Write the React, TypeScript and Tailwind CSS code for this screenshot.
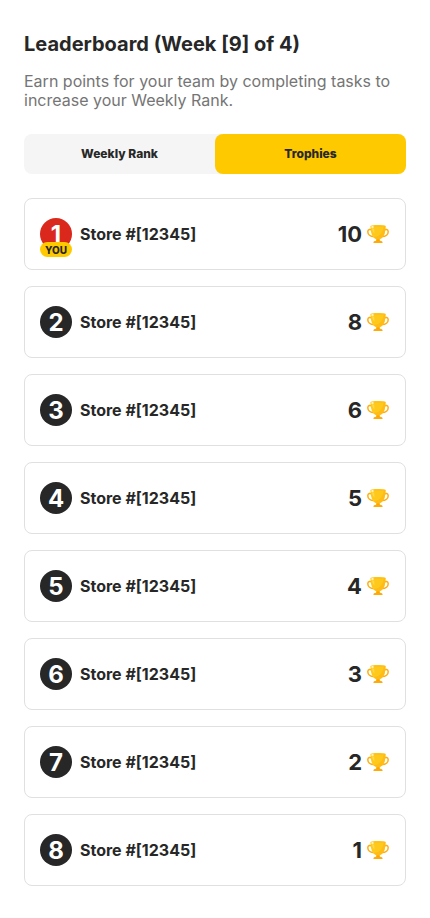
import { useState } from "react";

type Team = { rank: number; store: string; trophies: number; you?: boolean };

const teams: Team[] = [
  { rank: 1, store: "Store #[12345]", trophies: 10, you: true },
  { rank: 2, store: "Store #[12345]", trophies: 8 },
  { rank: 3, store: "Store #[12345]", trophies: 6 },
  { rank: 4, store: "Store #[12345]", trophies: 5 },
  { rank: 5, store: "Store #[12345]", trophies: 4 },
  { rank: 6, store: "Store #[12345]", trophies: 3 },
  { rank: 7, store: "Store #[12345]", trophies: 2 },
  { rank: 8, store: "Store #[12345]", trophies: 1 },
];

function TrophyIcon() {
  return (
    <svg viewBox="0 0 24 24" className="size-6" aria-hidden="true">
      <g fill="none" stroke="#ffad0a" strokeWidth="1.5">
        <path d="M6 8.200C4.400 7 1.800 7.300 1.800 9.700c0 2.700 2.600 4.800 6 4.800" />
        <path d="M18 8.200c1.600-1.200 4.200-.9 4.200 1.500 0 2.700-2.600 4.800-6 4.800" />
      </g>
      <path d="M10.400 15.500h3.200l.3 4h-3.800z" fill="#fca500" />
      <path d="M7.500 20.100c0-1 1.800-1.300 4.500-1.300s4.500.3 4.500 1.300v1h-9z" fill="#ffaa08" />
      <path
        d="M4.500 4.200c0-.7 3.300-1.100 7.500-1.100s7.500.4 7.500 1.100c0 7-2 13-7.500 13s-7.500-6-7.500-13z"
        fill="#ffc91c"
      />
      <path
        d="M19.500 4.200c0 7-2 13-7.500 13-2 0-3.500-.8-4.700-2.100 6.300-.2 10-4.700 10.400-11.600 1.100.2 1.800.4 1.800.7z"
        fill="#ffbc17"
      />
      <ellipse cx="12.500" cy="4.200" rx="6" ry=".6" fill="#ffbd18" />
      <path d="M6.200 6.400c.7.300 1.300.4 1.900.4l.4 4.500c-1.300-1-2.100-2.500-2.300-4.900z" fill="#ffd94f" />
      <circle cx="6.500" cy="5" r="1.200" fill="#fff0b3" />
    </svg>
  );
}

function RankBadge({ rank, you }: { rank: number; you?: boolean }) {
  return (
    <div
      className={`relative flex size-8 items-center justify-center rounded-full pt-0.5 text-2xl font-bold text-white ${
        you ? "bg-[#da291c]" : "bg-[#272727]"
      }`}
    >
      {rank}
      {you && (
        <span className="absolute inset-x-0 top-6 flex h-[15px] items-center justify-center rounded-full bg-[#ffc900] text-[10px] leading-3 font-extrabold text-[#272727]">
          YOU
        </span>
      )}
    </div>
  );
}

export default function App() {
  const [tab, setTab] = useState("Trophies");
  return (
    <main className="min-h-screen bg-white px-6 py-8 font-['Inter',sans-serif] text-[#272727]">
      <h1 className="text-xl leading-6 font-bold">Leaderboard (Week [9] of 4)</h1>
      <p className="mt-4 text-base leading-[19px] font-normal text-[#757575]">
        Earn points for your team by completing tasks to increase your Weekly Rank.
      </p>
      <div role="tablist" className="mt-6 grid grid-cols-2 rounded-lg bg-[#f5f5f5]">
        {["Weekly Rank", "Trophies"].map((name) => (
          <button
            key={name}
            type="button"
            role="tab"
            aria-selected={tab === name}
            onClick={() => setTab(name)}
            className={`h-10 rounded-lg text-xs font-extrabold ${tab === name ? "bg-[#ffc900]" : ""}`}
          >
            {name}
          </button>
        ))}
      </div>
      <ol className="mt-6 flex flex-col gap-4">
        {teams.map((team) => (
          <li
            key={team.rank}
            className="flex h-[72px] items-center gap-2 rounded-lg border border-[#e0e0e0] px-[15px]"
          >
            <RankBadge rank={team.rank} you={team.you} />
            <span className="text-base font-bold">{team.store}</span>
            <span className="ml-auto flex items-center gap-1 text-[22px] font-bold">
              {team.trophies}
              <TrophyIcon />
            </span>
          </li>
        ))}
      </ol>
    </main>
  );
}
